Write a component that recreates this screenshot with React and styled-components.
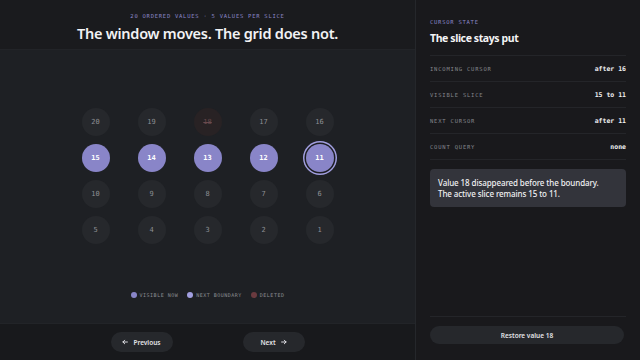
import styled, {createGlobalStyle} from "styled-components";

const GlobalStyle = createGlobalStyle`
  * { box-sizing: border-box; }
  html, body { margin: 0; padding: 0; background: #1a1b1e; }
  body { font-family: "Noto Sans", "Open Sans", sans-serif; }
`

const mono = `"DejaVu Sans Mono", "Liberation Mono", monospace`

const values = Array.from({length: 20}, (_, i) => 20 - i)
const visible = [15, 14, 13, 12, 11]
const deleted = 18
const boundary = 11

const rows = [
    ["Incoming cursor", "after 16"],
    ["Visible slice", "15 to 11"],
    ["Next cursor", "after 11"],
    ["Count query", "none"],
]

const Page = styled.div`
  display: grid;
  grid-template-columns: 416px 224px;
  width: 640px;
  height: 360px;
  overflow: hidden;
`

const Stage = styled.section`
  display: flex;
  flex-direction: column;
  border-right: 1px solid #25272b;
`

const Header = styled.header`
  height: 50px;
  background: #1a1b1e;
  display: flex;
  flex-direction: column;
  align-items: center;
  padding-top: 13px;
  border-bottom: 1px solid #222428;
`

const Eyebrow = styled.div`
  font-family: ${mono};
  font-size: 5.5px;
  letter-spacing: 0.75px;
  text-transform: uppercase;
  color: #8a86c6;
  line-height: 6px;
`

const Title = styled.h1`
  margin: 4px 0 0;
  font-size: 14.5px;
  font-weight: 600;
  color: #f2f2f4;
  letter-spacing: -0.25px;
  line-height: 20px;
`

const Board = styled.div`
  flex: 1;
  background: #1e2024;
  display: flex;
  flex-direction: column;
  align-items: center;
  padding-top: 58px;
`

const Grid = styled.div`
  display: grid;
  grid-template-columns: repeat(5, 28px);
  column-gap: 28px;
  row-gap: 8px;
`

const Cell = styled.div`
  width: 28px;
  height: 28px;
  border-radius: 50%;
  display: flex;
  align-items: center;
  justify-content: center;
  font-family: ${mono};
  font-size: 7px;
  font-weight: ${p => p.$active ? 700 : 400};
  color: ${p => p.$active ? "#ffffff" : p.$deleted ? "#6a4a4e" : "#8d8f94"};
  background: ${p => p.$active ? "#8985c8" : p.$deleted ? "#282224" : "#26282c"};
  text-decoration: ${p => p.$deleted ? "line-through" : "none"};
  box-shadow: ${p => p.$boundary ? "0 0 0 1.5px #1c1d21, 0 0 0 3px #a29fe0" : "none"};
`

const Legend = styled.div`
  display: flex;
  gap: 9px;
  margin-top: 48px;
`

const LegendItem = styled.div`
  display: flex;
  align-items: center;
  gap: 3px;
  font-family: ${mono};
  font-size: 5px;
  letter-spacing: 0.5px;
  text-transform: uppercase;
  color: #8b8d92;
`

const Dot = styled.span`
  width: 6px;
  height: 6px;
  border-radius: 50%;
  background: ${p => p.$color};
`

const Footer = styled.footer`
  height: 37px;
  background: #18191c;
  border-top: 1px solid #222428;
  display: flex;
  align-items: center;
  justify-content: center;
  gap: 70px;
`

const Pill = styled.button`
  width: ${p => p.$wide ? "194px" : "62px"};
  height: ${p => p.$wide ? "18px" : "20px"};
  border: none;
  border-radius: 10px;
  background: #26282c;
  color: #e4e4e8;
  font-family: "Noto Sans", "Open Sans", sans-serif;
  font-size: 6.5px;
  font-weight: 600;
  display: flex;
  align-items: center;
  justify-content: center;
  gap: 5px;
  padding: 0;
`

const Side = styled.aside`
  background: #19191c;
  display: flex;
  flex-direction: column;
  padding: 19px 14px 16px 14px;
`

const SideTitle = styled.h2`
  margin: 6px 0 0;
  font-size: 10.5px;
  font-weight: 700;
  color: #f4f4f6;
  letter-spacing: -0.4px;
  line-height: 14px;
  padding-bottom: 10px;
  border-bottom: 1px solid #242529;
`

const Row = styled.div`
  display: flex;
  justify-content: space-between;
  align-items: center;
  height: 26px;
  border-bottom: 1px solid #242529;
`

const RowLabel = styled.span`
  font-family: ${mono};
  font-size: 5.5px;
  letter-spacing: 0.8px;
  text-transform: uppercase;
  color: #85878c;
`

const RowValue = styled.span`
  font-family: ${mono};
  font-size: 6.5px;
  font-weight: 700;
  color: #f0f0f2;
`

const Note = styled.div`
  margin-top: 9px;
  background: #33343b;
  border-radius: 4px;
  padding: 8px 8px;
  font-size: 8px;
  line-height: 11px;
  font-weight: 500;
  color: #f0f0f2;
  letter-spacing: -0.1px;
`

const SideFooter = styled.div`
  margin-top: auto;
  border-top: 1px solid #242529;
  padding-top: 9px;
`

const Arrow = ({dir}) => (
    <svg width="6" height="6" viewBox="0 0 10 10" fill="none" stroke="currentColor" strokeWidth="1.6" strokeLinecap="round" strokeLinejoin="round">
        {dir === "left"
            ? <path d="M9 5H1.5M4.5 2L1.5 5l3 3"/>
            : <path d="M1 5h7.5M5.5 2l3 3-3 3"/>}
    </svg>
)

export default function App() {
    return (
        <Page>
            <GlobalStyle/>
            <Stage>
                <Header>
                    <Eyebrow>20 ordered values · 5 values per slice</Eyebrow>
                    <Title>The window moves. The grid does not.</Title>
                </Header>
                <Board>
                    <Grid>
                        {values.map(v => (
                            <Cell key={v}
                                  $active={visible.includes(v)}
                                  $deleted={v === deleted}
                                  $boundary={v === boundary}>
                                {v}
                            </Cell>
                        ))}
                    </Grid>
                    <Legend>
                        <LegendItem><Dot $color="#8985c8"/>Visible now</LegendItem>
                        <LegendItem><Dot $color="#a29fe0"/>Next boundary</LegendItem>
                        <LegendItem><Dot $color="#6a3a3f"/>Deleted</LegendItem>
                    </Legend>
                </Board>
                <Footer>
                    <Pill><Arrow dir="left"/>Previous</Pill>
                    <Pill>Next<Arrow dir="right"/></Pill>
                </Footer>
            </Stage>
            <Side>
                <Eyebrow>Cursor state</Eyebrow>
                <SideTitle>The slice stays put</SideTitle>
                {rows.map(([label, value]) => (
                    <Row key={label}>
                        <RowLabel>{label}</RowLabel>
                        <RowValue>{value}</RowValue>
                    </Row>
                ))}
                <Note>
                    Value 18 disappeared before the boundary.<br/>
                    The active slice remains 15 to 11.
                </Note>
                <SideFooter>
                    <Pill $wide>Restore value 18</Pill>
                </SideFooter>
            </Side>
        </Page>
    )
}
